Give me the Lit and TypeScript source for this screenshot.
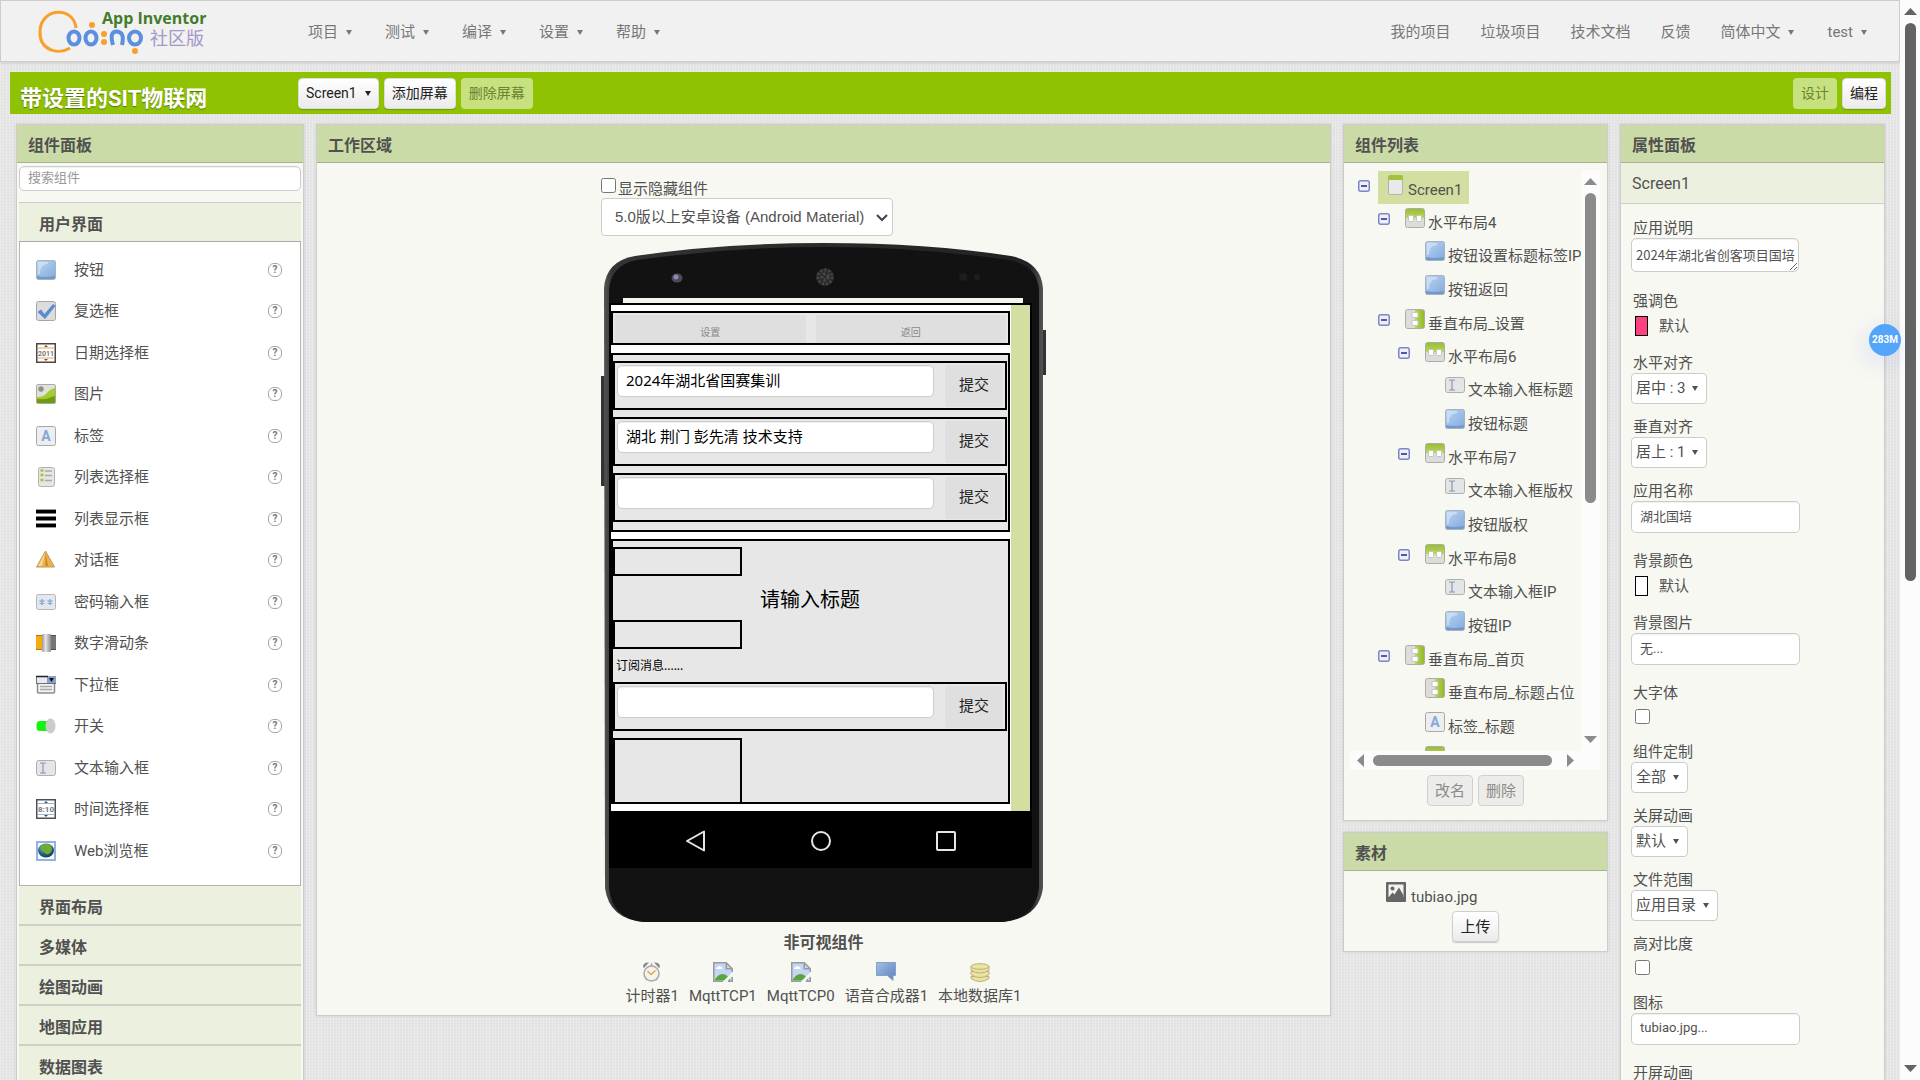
import { LitElement, html, svg, css, nothing } from 'lit';
import type { SVGTemplateResult } from 'lit';
import { customElement, property } from 'lit/decorators.js';
import { classMap } from 'lit/directives/class-map.js';

interface TreeNode {
  label: string;
  icon: string;
  level: number;
  branch?: boolean;
  selected?: boolean;
}

interface PropertyField {
  id: string;
  label: string;
  kind: 'textarea' | 'color' | 'select' | 'text' | 'checkbox';
  value?: string;
}

const ICONS: Record<string, SVGTemplateResult> = {
  button: svg`
    <defs>
      <linearGradient id="g" x1="0" y1="0" x2="1" y2="1">
        <stop offset="0" stop-color="#b9d2f1"/><stop offset="1" stop-color="#86aee0"/>
      </linearGradient>
    </defs>
    <rect x="0.5" y="0.5" width="19" height="19" rx="2" fill="#7397c8" stroke="#a9b3bf"/>
    <path d="M1 2q0-1 1-1h16q1 0 1 1v14q-9 2-18 0z" fill="url(#g)"/>
    <path d="M2 2h10v2q-8 0-8 10l-2 0z" fill="#d6e4f7" opacity="0.7"/>`,
  checkbox: svg`
    <rect x="0.5" y="0.5" width="19" height="19" rx="2" fill="#dcdcdc" stroke="#a6a6a6"/>
    <path d="M1.500 11l3.500-2.500 3.500 4.500L17 3l2.500 2L9 18z" fill="#5d8bd0"/>`,
  date: svg`
    <rect x="0.750" y="0.750" width="18.500" height="18.500" fill="#fff" stroke="#4d4744" stroke-width="1.500"/>
    <path d="M2 5h16M2 15h16" stroke="#e0a46b"/>
    <path d="M8 4l2-2 2 2zM8 16l2 2 2-2z" fill="#8c4a1d"/>
    <text x="10" y="13" text-anchor="middle" font-size="7" font-weight="bold" fill="#777">2011</text>`,
  image: svg`
    <rect x="0.500" y="0.500" width="19" height="19" rx="1.500" fill="#dfe2da" stroke="#a9aba4"/>
    <path d="M1 13q7 0 10-4t8-5v15H1z" fill="#a4cc2c"/>
    <path d="M1 15q8 1 12-1t6-2v7H1z" fill="#6f9a12"/>
    <circle cx="5" cy="5" r="2.700" fill="#8d8d8d"/>`,
  label: svg`
    <rect x="0.500" y="0.500" width="19" height="19" rx="2" fill="#eceeef" stroke="#a8a8a8"/>
    <text x="10" y="15" text-anchor="middle" font-size="14" font-weight="bold" fill="#86a8da">A</text>`,
  listpicker: svg`
    <rect x="2.500" y="0.500" width="16" height="19" rx="2" fill="#e6e6e3" stroke="#b3b3ae"/>
    <path d="M4.500 3.500h3M4.500 8h3M4.500 13h3" stroke="#a8c23c" stroke-width="2.500"/>
    <path d="M9 4h7M9 8.500h7M9 13.500h7" stroke="#a9a9a9" stroke-width="1.500"/>`,
  listview: svg`
    <path d="M0 2.500h20M0 9.500h20M0 16.500h20" stroke="#000" stroke-width="4"/>
    <path d="M0 0.500h20M0 18.500h20" stroke="#9a9a9a"/>`,
  notifier: svg`
    <path d="M9.500 1L0.500 17h18z" fill="#eeb04c" stroke="#bb9a62"/>
    <path d="M9.500 2L2 16h4z" fill="#f8d693"/>
    <path d="M9.500 2l0 14h2.500z" fill="#cf8421"/>`,
  password: svg`
    <rect x="0.500" y="2.500" width="19" height="15" rx="2" fill="#e4e7ec" stroke="#b3b6bb"/>
    <path d="M6 7v6M3.500 8.500l5 3M8.500 8.500l-5 3M14 7v6M11.500 8.500l5 3M16.500 8.500l-5 3" stroke="#88a9dd" stroke-width="1.400"/>`,
  slider: svg`
    <defs>
      <linearGradient id="g" x1="0" y1="0" x2="1" y2="0">
        <stop offset="0" stop-color="#9a9a9a"/><stop offset="0.400" stop-color="#e6e6e6"/><stop offset="1" stop-color="#8b8b8b"/>
      </linearGradient>
    </defs>
    <rect x="0" y="2" width="8" height="15" fill="#f3ac10"/>
    <path d="M0 2.500h8M0 16.500h8" stroke="#a87a12"/>
    <rect x="13" y="2" width="7" height="15" fill="#767676"/>
    <path d="M13 2.500h7M13 16.500h7" stroke="#4e4e4e"/>
    <rect x="6" y="1" width="9" height="18" rx="1" fill="url(#g)"/>`,
  spinner: svg`
    <rect x="1.500" y="4" width="17" height="14" rx="1" fill="#f2f2f2" stroke="#8d8d8d" stroke-width="1.500"/>
    <rect x="0.500" y="1.500" width="19" height="7" fill="#e9eaec" stroke="#6b7079"/>
    <rect x="11" y="1" width="9" height="7" fill="#86a0cf"/>
    <path d="M0 1.500h12" stroke="#222" stroke-width="1.500"/>
    <path d="M13 3h5l-2.500 4z" fill="#111"/>
    <path d="M4 11.500h12M4 14.500h12" stroke="#a9a9a9" stroke-width="1.500"/>`,
  switch: svg`
    <rect x="0.500" y="5" width="16" height="10" rx="3.500" fill="#11f511"/>
    <ellipse cx="14.500" cy="10" rx="5" ry="7.500" fill="#cbcbcb"/>`,
  textbox: svg`
    <rect x="0.500" y="2.500" width="19" height="15" rx="2" fill="#e4e5e7" stroke="#b0b0b0"/>
    <path d="M4 5h2q1 0 1 1v8q0 1-1 1H4M10 5H8q-1 0-1 1v8q0 1 1 1h2" fill="none" stroke="#8a96b4" stroke-width="1.200"/>`,
  time: svg`
    <rect x="0.750" y="0.750" width="18.500" height="18.500" fill="#fff" stroke="#4a5158" stroke-width="1.500"/>
    <path d="M2 4.500h16M2 15.500h16" stroke="#9db9d6"/>
    <path d="M8 4l2-2 2 2zM8 16l2 2 2-2z" fill="#33506e"/>
    <text x="10" y="13" text-anchor="middle" font-size="8" font-weight="bold" fill="#777">8:10</text>`,
  web: svg`
    <defs>
      <radialGradient id="g" cx="0.400" cy="0.300" r="0.800">
        <stop offset="0" stop-color="#9fd0c4"/><stop offset="0.500" stop-color="#2d6a8c"/><stop offset="1" stop-color="#0c2c50"/>
      </radialGradient>
    </defs>
    <rect x="1" y="1" width="18" height="18" fill="#f5f8fc" stroke="#94b1df" stroke-width="2"/>
    <ellipse cx="10" cy="9.500" rx="8" ry="7" fill="url(#g)"/>
    <path d="M6 4q5-2 9 0l1 5q-2 5-6 4l-3-3q-3-2-1-6z" fill="#6fae2b"/>`,
  form: svg`
    <rect x="3.500" y="0.500" width="14" height="19" rx="1.500" fill="#e9e9ea" stroke="#b3b3b0"/>
    <path d="M3 2q0-2 2-2h11q2 0 2 2v3H3z" fill="#a6c03f"/>`,
  horizontal: svg`
    <defs>
      <linearGradient id="g" x1="0" y1="0" x2="0" y2="1">
        <stop offset="0" stop-color="#9bbd35"/><stop offset="1" stop-color="#b9d75a"/>
      </linearGradient>
    </defs>
    <rect x="0.500" y="0.500" width="19" height="19" rx="2" fill="#dbdcdb" stroke="#acaea6"/>
    <path d="M1 2q0-1 1-1h16q1 0 1 1v8H1z" fill="url(#g)"/>
    <rect x="3.500" y="7.500" width="5" height="6" rx="1" fill="#fff" stroke="#c3c6b8"/>
    <rect x="11.500" y="7.500" width="5" height="6" rx="1" fill="#fff" stroke="#c3c6b8"/>`,
  vertical: svg`
    <defs>
      <linearGradient id="g" x1="0" y1="0" x2="1" y2="0">
        <stop offset="0" stop-color="#b9d75a"/><stop offset="1" stop-color="#94b92c"/>
      </linearGradient>
    </defs>
    <rect x="0.500" y="0.500" width="19" height="19" rx="2" fill="#dbdcdb" stroke="#acaea6"/>
    <path d="M10 1h8q1 0 1 1v16q0 1-1 1h-8z" fill="url(#g)"/>
    <rect x="7" y="3.500" width="6" height="5" rx="1" fill="#fff" stroke="#c3c6b8"/>
    <rect x="7" y="11.500" width="6" height="5" rx="1" fill="#fff" stroke="#c3c6b8"/>`,
  clock: svg`
    <path d="M1 5q0-5 6-4.500L2 6zM18 5q0-5-6-4.500L17 6z" fill="#8a8a8a"/>
    <path d="M4 18l2-2M15 18l-2-2M9.500 1.500v3" stroke="#9a9a9a" stroke-width="1.500"/>
    <circle cx="9.500" cy="11.500" r="7.500" fill="#f4f2ec" stroke="#a9a9a9" stroke-width="1.500"/>
    <path d="M5.500 9l3.500 3.500 4.500-4" fill="none" stroke="#e7a850" stroke-width="1.600"/>`,
  broken: svg`
    <path d="M0.750 0.750h12.500l6 6v12.500H0.750z" fill="#c6d5f6"/>
    <path d="M3 7q0-2 2-2 1-2 3 0 2 0 1.500 2z" fill="#fff"/>
    <path d="M1.500 18.500q3-6.500 8-6.500t8 6.500z" fill="#56a83d"/>
    <path d="M10 19.500l9.500-9.500v4L14 19.500z" fill="#f7f8f2"/>
    <path d="M10 19.250H0.750V0.750h12.500l6 6V10M13.250 0.750v6h6M19.250 15v4.250H15" fill="none" stroke="#9a9a9a" stroke-width="1.500"/>`,
  speech: svg`
    <defs>
      <linearGradient id="g" x1="0" y1="0" x2="1" y2="1">
        <stop offset="0" stop-color="#a3bee2"/><stop offset="1" stop-color="#5b80be"/>
      </linearGradient>
    </defs>
    <path d="M0.500 0.500h19v13H17v5l-5.500-5h-11z" fill="url(#g)" stroke="#86a0c8"/>`,
  database: svg`
    <g fill="#ebe3a0" stroke="#b9b17c">
      <path d="M1 14.500v2q4 3 9 3t9-3v-2z"/>
      <path d="M1 9.500v3q4 3 9 3t9-3v-3z"/>
      <path d="M1 4.500v3.500q4 3 9 3t9-3V4.500z"/>
      <ellipse cx="10" cy="4.500" rx="9" ry="2.800"/>
    </g>`,
  picture: svg`
    <rect x="0" y="0" width="20" height="20" rx="1" fill="#666"/>
    <rect x="2.500" y="2.500" width="15" height="12.500" fill="#f3f3f1"/>
    <circle cx="6.500" cy="6.500" r="2" fill="#666"/>
    <path d="M2.500 15.500l4-5 2 2 4.500-7 4.500 8v2z" fill="#666"/>`,
};

const PALETTE = [
  ['button', '按钮'],
  ['checkbox', '复选框'],
  ['date', '日期选择框'],
  ['image', '图片'],
  ['label', '标签'],
  ['listpicker', '列表选择框'],
  ['listview', '列表显示框'],
  ['notifier', '对话框'],
  ['password', '密码输入框'],
  ['slider', '数字滑动条'],
  ['spinner', '下拉框'],
  ['switch', '开关'],
  ['textbox', '文本输入框'],
  ['time', '时间选择框'],
  ['web', 'Web浏览框'],
];

const CATEGORIES = ['界面布局', '多媒体', '绘图动画', '地图应用', '数据图表'];

const TREE: TreeNode[] = [
  { label: 'Screen1', icon: 'form', level: 0, branch: true, selected: true },
  { label: '水平布局4', icon: 'horizontal', level: 1, branch: true },
  { label: '按钮设置标题标签IP', icon: 'button', level: 2 },
  { label: '按钮返回', icon: 'button', level: 2 },
  { label: '垂直布局_设置', icon: 'vertical', level: 1, branch: true },
  { label: '水平布局6', icon: 'horizontal', level: 2, branch: true },
  { label: '文本输入框标题', icon: 'textbox', level: 3 },
  { label: '按钮标题', icon: 'button', level: 3 },
  { label: '水平布局7', icon: 'horizontal', level: 2, branch: true },
  { label: '文本输入框版权', icon: 'textbox', level: 3 },
  { label: '按钮版权', icon: 'button', level: 3 },
  { label: '水平布局8', icon: 'horizontal', level: 2, branch: true },
  { label: '文本输入框IP', icon: 'textbox', level: 3 },
  { label: '按钮IP', icon: 'button', level: 3 },
  { label: '垂直布局_首页', icon: 'vertical', level: 1, branch: true },
  { label: '垂直布局_标题占位', icon: 'vertical', level: 2 },
  { label: '标签_标题', icon: 'label', level: 2 },
  { label: '', icon: 'horizontal', level: 2 },
];

const FIELDS: PropertyField[] = [
  { id: 'about', label: '应用说明', kind: 'textarea', value: '2024年湖北省创客项目国培' },
  { id: 'accent', label: '强调色', kind: 'color', value: '#ff4081' },
  { id: 'halign', label: '水平对齐', kind: 'select', value: '居中 : 3' },
  { id: 'valign', label: '垂直对齐', kind: 'select', value: '居上 : 1' },
  { id: 'appname', label: '应用名称', kind: 'text', value: '湖北国培' },
  { id: 'bgcolor', label: '背景颜色', kind: 'color', value: '#ffffff' },
  { id: 'bgimage', label: '背景图片', kind: 'text', value: '无...' },
  { id: 'bigtext', label: '大字体', kind: 'checkbox' },
  { id: 'blocks', label: '组件定制', kind: 'select', value: '全部' },
  { id: 'closeanim', label: '关屏动画', kind: 'select', value: '默认' },
  { id: 'filescope', label: '文件范围', kind: 'select', value: '应用目录' },
  { id: 'contrast', label: '高对比度', kind: 'checkbox' },
  { id: 'icon', label: '图标', kind: 'text', value: 'tubiao.jpg...' },
  { id: 'openanim', label: '开屏动画', kind: 'select', value: '默认' },
];

const HIDDEN_COMPONENTS = [
  ['clock', '计时器1'],
  ['broken', 'MqttTCP1'],
  ['broken', 'MqttTCP0'],
  ['speech', '语音合成器1'],
  ['database', '本地数据库1'],
];

@customElement('component-icon')
export class ComponentIcon extends LitElement {
  @property() name = '';

  static override styles = css`
    :host {
      display: block;
      flex: none;
      width: 20px;
      height: 20px;
    }

    svg {
      display: block;
      font-family: Roboto, sans-serif;
    }
  `;

  override render() {
    return html`<svg width="20" height="20" viewBox="0 0 20 20" aria-hidden="true">${ICONS[this.name]}</svg>`;
  }
}

@customElement('scroll-rail')
export class ScrollRail extends LitElement {
  @property({ type: Boolean, reflect: true }) horizontal = false;

  // share of the track that the thumb covers, in percent
  @property({ type: Number }) size = 50;

  static override styles = css`
    :host {
      display: flex;
      flex-direction: column;
      align-items: center;
      width: 19px;
      padding: 8px 0;
      box-sizing: border-box;
      background: #fcfcfc;
      color: #8b8b8b;
    }

    :host([horizontal]) {
      flex-direction: row;
      width: auto;
      height: 19px;
      padding: 0 7px;
    }

    svg {
      display: block;
      flex: none;
      fill: currentColor;
    }

    .track {
      flex: 1;
      width: 11px;
      margin: 8px 0;
    }

    :host([horizontal]) .track {
      width: auto;
      height: 11px;
      margin: 0 9px;
    }

    .thumb {
      width: 100%;
      height: 100%;
      border-radius: 6px;
      background: currentColor;
    }
  `;

  override render() {
    const side = this.horizontal ? 'width' : 'height';
    return html`
      ${this.horizontal
        ? html`<svg width="7" height="13"><path d="M7 0v13L0 6.500z"/></svg>`
        : html`<svg width="13" height="7"><path d="M0 7h13L6.500 0z"/></svg>`}
      <div class="track"><div class="thumb" style="${side}: ${this.size}%"></div></div>
      ${this.horizontal
        ? html`<svg width="7" height="13"><path d="M0 0v13l7-6.500z"/></svg>`
        : html`<svg width="13" height="7"><path d="M0 0h13L6.500 7z"/></svg>`}
    `;
  }
}

const controls = css`
  * {
    box-sizing: border-box;
  }

  button,
  input,
  select,
  textarea {
    margin: 0;
    font: inherit;
    color: inherit;
  }

  .btn {
    height: 31px;
    padding: 0 7px;
    border: 1px solid #d0d0d0;
    border-radius: 4px;
    background: linear-gradient(#fff, #ebebeb);
    box-shadow: 0 1px 1px rgba(0, 0, 0, 0.2);
    color: #222;
    line-height: 20px;
    white-space: nowrap;
  }

  .btn:disabled {
    background: #ececea;
    box-shadow: none;
    color: #8b8b88;
  }

  .caret::after {
    content: '';
    display: inline-block;
    margin-left: 8px;
    border: 3px solid transparent;
    border-top: 5px solid currentColor;
    border-bottom: 0;
    vertical-align: 2px;
  }

  input[type='checkbox'] {
    display: block;
    width: 15px;
    height: 15px;
  }

  .text {
    display: block;
    padding: 0 8px 3px;
    border: 1px solid #ccc;
    border-radius: 5px;
    background: #fff;
    box-shadow: inset 0 1px 1px rgba(0, 0, 0, 0.06);
    outline: none;
  }
`;

@customElement('phone-preview')
export class PhonePreview extends LitElement {
  static override styles = [
    controls,
    css`
      :host {
        display: block;
        position: relative;
        width: 445px;
        padding: 61px 14px 54px 8px;
        box-sizing: border-box;
        color: #000;
        font-family: 'Noto Sans', 'Noto Sans CJK SC', sans-serif;
        font-size: 15px;
      }

      .frame {
        position: absolute;
        inset: 0;
        width: 100%;
        height: 100%;
      }

      .display {
        position: relative;
        background: #000;
      }

      .screen {
        display: flex;
        padding: 2px 2px 0;
      }

      .form {
        flex: 1;
        padding: 6px 1px 7px 0;
        background: #fff;
      }

      .strip {
        width: 19px;
        background: #d2dfa1;
      }

      .box {
        border: 2px solid #000;
        background: #e7e7e7;
      }

      .tabs {
        display: flex;
        gap: 10px;
        padding: 2px 2px 0;
        margin-bottom: 8px;
      }

      .tabs button {
        flex: 1;
        height: 28px;
        padding: 6px 0 0;
        border: 0;
        background: #dfdfdf;
        color: #888;
        font-size: 10px;
        line-height: 20px;
      }

      .settings {
        display: flex;
        flex-direction: column;
        gap: 7px;
        padding: 6px 1px 8px 0;
        margin-bottom: 7px;
      }

      .row {
        display: flex;
        gap: 11px;
        padding: 2px 2px 1px;
      }

      .row .text {
        flex: 1;
        min-width: 0;
        height: 32px;
      }

      .row button {
        width: 58px;
        height: 42px;
        padding: 0 0 4px;
        border: 0;
        border-radius: 2px;
        background: #dfdfdf;
        color: #222;
      }

      .home {
        padding: 6px 1px 0 0;
      }

      .slot {
        width: 129px;
        height: 29px;
      }

      .title {
        margin: 0;
        padding-top: 4px;
        font-size: 20px;
        line-height: 40px;
        text-align: center;
      }

      .message {
        margin: 0;
        padding: 1px 0 0 3px;
        font-size: 12px;
        line-height: 32px;
      }

      .tall {
        height: 64px;
        margin-top: 7px;
        border-bottom: 0;
      }

      .keys {
        display: flex;
        justify-content: space-between;
        align-items: center;
        height: 57px;
        padding: 2px 75px 0 76px;
      }

      .keys svg {
        display: block;
        fill: none;
        stroke: #e6e6e6;
        stroke-width: 2;
      }
    `,
  ];

  private row(id: string, value: string) {
    return html`
      <div class="box row">
        <input class="text" type="text" id=${id} aria-label="文本输入框" .value=${value}>
        <button type="button">提交</button>
      </div>
    `;
  }

  override render() {
    return html`
      <svg class="frame" viewBox="0 0 445 680" preserveAspectRatio="none" aria-hidden="true">
        <defs>
          <linearGradient id="edge" x1="0" y1="0" x2="1" y2="0">
            <stop offset="0" stop-color="#555"/><stop offset="0.020" stop-color="#333"/>
            <stop offset="0.970" stop-color="#222"/><stop offset="1" stop-color="#555"/>
          </linearGradient>
        </defs>
        <path d="M0 134h4v110H0zM441 88h4v45h-4z" fill="#333"/>
        <path d="M3 46Q5 19 34 14Q120 1 223 1T410 14Q440 20 442 46V646Q438 676 402 680H43Q8 677 4 646z" fill="url(#edge)"/>
        <path d="M8 48Q10 23 36 18Q130 5 223 5T408 18Q436 23 438 48V646Q434 676 402 680H43Q11 677 8 646z" fill="#121212"/>
        <ellipse cx="76" cy="36" rx="5.500" ry="4.500" fill="#4a4a58"/>
        <circle cx="75" cy="35" r="2.500" fill="#8b8bb5"/>
        <circle cx="224" cy="35" r="9" fill="#2b2b2b"/>
        <circle cx="224" cy="35" r="7" fill="none" stroke="#454545" stroke-width="3" stroke-dasharray="2 2"/>
        <circle cx="224" cy="35" r="3" fill="none" stroke="#4c4c4c" stroke-width="3" stroke-dasharray="2 2"/>
        <circle cx="362" cy="35" r="4" fill="#1d1d1f"/>
        <circle cx="376" cy="35" r="3" fill="#1d1d1f"/>
        <path d="M22 56h400v6H22z" fill="#f5f5f0"/>
      </svg>
      <div class="display">
        <div class="screen">
          <div class="form">
            <div class="box tabs">
              <button type="button">设置</button>
              <button type="button">返回</button>
            </div>
            <div class="box settings">
              ${this.row('title', '2024年湖北省国赛集训')}
              ${this.row('copyright', '湖北 荆门 彭先清 技术支持')}
              ${this.row('ip', '')}
            </div>
            <div class="box home">
              <div class="box slot"></div>
              <p class="title">请输入标题</p>
              <div class="box slot"></div>
              <p class="message">订阅消息......</p>
              ${this.row('message', '')}
              <div class="box slot tall"></div>
            </div>
          </div>
          <div class="strip"></div>
        </div>
        <div class="keys">
          <svg width="22" height="22"><path d="M2 11L19 1.500v19z" stroke-linejoin="round"/></svg>
          <svg width="22" height="22"><circle cx="11" cy="11" r="9"/></svg>
          <svg width="22" height="22"><rect x="2" y="2" width="18" height="18" rx="1"/></svg>
        </div>
      </div>
    `;
  }
}

@customElement('app-root')
export class AppRoot extends LitElement {
  static override styles = [
    controls,
    css`
      :host {
        display: flex;
        height: 100vh;
        overflow: hidden;
        color: #515151;
        background: #e6e6e6;
        font-family: Roboto, 'Noto Sans CJK SC', sans-serif;
        font-size: 15px;
        line-height: 20px;
      }

      .page {
        flex: 1;
        min-width: 0;
        overflow: hidden;
        background:
          repeating-linear-gradient(90deg, rgba(255, 255, 255, 0.25) 0 1px, transparent 1px 3px),
          repeating-linear-gradient(rgba(0, 0, 0, 0.02) 0 1px, transparent 1px 3px),
          #e5e5e5;
      }

      .window-rail {
        flex: none;
        width: 20px;
        color: #636363;
      }

      /* top bar */
      .topbar {
        display: flex;
        align-items: center;
        height: 62px;
        padding: 1px 29px 0 36px;
        border: 1px solid #ccc;
        background: #f1f1f1;
        box-shadow: 0 1px 3px rgba(0, 0, 0, 0.12);
        color: #777;
      }

      .logo {
        display: block;
        flex: none;
        margin-right: 101px;
      }

      .menu {
        display: flex;
        gap: 33px;
      }

      .links {
        display: flex;
        gap: 30px;
        margin-left: auto;
      }

      .links .caret {
        margin-right: 3px;
      }

      .menu button,
      .links button {
        padding: 0;
        border: 0;
        background: none;
      }

      .links a {
        color: inherit;
        text-decoration: none;
      }

      /* project bar */
      .project {
        display: flex;
        align-items: center;
        gap: 5px;
        height: 42px;
        margin: 10px 9px 10px 10px;
        padding: 0 5px 0 10px;
        background: #8fc202;
        font-size: 14px;
      }

      .project h1 {
        width: 273px;
        margin: 0;
        padding-top: 11px;
        color: #fff;
        font-size: 22px;
        line-height: 28px;
        text-shadow: 0 1px 1px rgba(0, 0, 0, 0.4);
      }

      .project .btn {
        border-color: #dcdcdc;
      }

      .project .btn:disabled {
        border-color: transparent;
        background: rgba(255, 255, 255, 0.5);
        background-clip: border-box;
        color: #6c8330;
      }

      .project .spacer {
        flex: 1;
      }

      /* columns */
      .columns {
        display: flex;
        align-items: flex-start;
        gap: 12px;
        padding: 0 15px 0 16px;
      }

      .panel {
        border: 1px solid #ccc;
        background: #f7f8f2;
        box-shadow: 0 0 3px rgba(0, 0, 0, 0.1);
      }

      .panel > h2 {
        margin: 0;
        padding: 8px 11px 3px;
        border-bottom: 1px solid #a9b194;
        background: #cbdba7;
        font-size: 16px;
        line-height: 26px;
      }

      .palette {
        flex: none;
        width: 288px;
      }

      .work {
        flex: 1;
        min-width: 0;
      }

      .side {
        display: flex;
        flex: none;
        flex-direction: column;
        gap: 11px;
        width: 265px;
      }

      /* palette */
      .palette .body {
        padding: 3px 2px 0;
      }

      .search {
        width: 100%;
        height: 25px;
        margin-bottom: 11px;
        font-size: 13px;
      }

      .search::placeholder {
        color: #999;
      }

      .category {
        display: block;
        width: 100%;
        height: 40px;
        padding: 5px 0 0 20px;
        border: 0;
        border-bottom: 2px solid #ccd1c6;
        background: #ecf0df;
        font-size: 16px;
        font-weight: bold;
        text-align: left;
      }

      .category.open {
        border-top: 1px solid #ccc;
        border-bottom: 1px solid #a9a9a9;
      }

      .items {
        margin: 0;
        padding: 7px 18px 14px 16px;
        border: 1px solid #b4b4b4;
        border-top: 0;
        background: #fff;
        list-style: none;
      }

      .item {
        display: flex;
        align-items: center;
        gap: 18px;
        height: 41px;
      }

      .item:nth-child(even) {
        height: 42px;
      }

      .item span {
        flex: 1;
      }

      .help {
        width: 14px;
        height: 14px;
        padding: 0;
        border: 1px solid #a6a6a6;
        border-radius: 6px;
        background: #fff;
        color: #777;
        font-size: 10px;
        font-weight: bold;
        line-height: 12px;
      }

      /* work area */
      .canvas {
        width: 445px;
        margin: 0 auto;
        padding: 14px 0 9px;
      }

      .show-hidden {
        display: flex;
        gap: 2px;
        height: 21px;
        padding-top: 1px;
      }

      .show-hidden label {
        padding-top: 1px;
      }

      .select {
        display: inline-block;
        position: relative;
      }

      .select select {
        display: block;
        appearance: none;
        border: 1px solid #ccc;
        border-radius: 4px;
        background: #fff;
      }

      .select svg {
        position: absolute;
        top: 50%;
        right: 5px;
        margin-top: -3px;
        fill: none;
        stroke: #444;
        stroke-width: 2;
        pointer-events: none;
      }

      .device select {
        height: 38px;
        padding: 0 27px 0 13px;
        font-family: 'Liberation Sans', 'Noto Sans CJK SC', sans-serif;
      }

      phone-preview {
        margin-top: 6px;
      }

      .device {
        display: table;
      }

      .canvas h3 {
        margin: 6px 0 4px;
        font-size: 16px;
        line-height: 30px;
        text-align: center;
      }

      .hidden-components {
        display: flex;
        justify-content: center;
        gap: 10px;
        margin: 0;
        padding: 0;
        list-style: none;
      }

      .hidden-components li {
        display: flex;
        flex-direction: column;
        align-items: center;
        gap: 4px;
      }

      /* component tree */
      .tree {
        display: grid;
        grid-template-columns: minmax(0, 1fr) 19px;
        grid-template-rows: 581px 19px;
        margin: 7px 7px 5px 6px;
        background: #fcfcfc;
      }

      .nodes {
        margin: 0;
        padding: 1px 0 0 8px;
        overflow: hidden;
        background: #f7f8f2;
        list-style: none;
      }

      .node {
        display: flex;
        height: 34px;
        white-space: nowrap;
      }

      .node.branch {
        height: 33px;
      }

      .toggle {
        flex: none;
        width: 20px;
        height: 20px;
        padding: 9px 0 0;
        border: 0;
        background: none;
      }

      .toggle svg {
        display: block;
      }

      .name {
        display: flex;
        gap: 3px;
        padding: 4px 7px 0;
      }

      .name span {
        padding-top: 5px;
      }

      .selected .name {
        background: #d2dfa1;
      }

      .indent {
        flex: none;
        width: calc(var(--level) * 20px);
      }

      .actions {
        display: flex;
        justify-content: center;
        gap: 5px;
        padding-bottom: 14px;
      }

      .media {
        display: flex;
        flex-direction: column;
        align-items: center;
        gap: 9px;
        padding: 11px 0 9px;
      }

      .file {
        display: flex;
        gap: 5px;
        align-self: flex-start;
        padding-left: 42px;
      }

      .file span {
        padding-top: 5px;
        height: 20px;
      }

      /* properties */
      .properties h3 {
        margin: 0;
        padding: 11px 11px 9px;
        border-bottom: 1px solid #ccc;
        background: #ecf0df;
        font-size: 16px;
        font-weight: normal;
        line-height: 20px;
      }

      .fields {
        padding: 14px 10px;
      }

      .field > label {
        display: block;
        padding-left: 2px;
      }

      .field .text {
        width: 169px;
        height: 32px;
        margin-bottom: 18px;
        font-size: 13px;
      }

      .field textarea.text {
        width: 168px;
        height: 34px;
        padding: 7px 4px;
        margin-bottom: 19px;
        overflow: hidden;
        white-space: pre;
        font-family: 'Noto Sans CJK SC', sans-serif;
        line-height: 18px;
      }

      .field .select {
        margin-bottom: 13px;
        vertical-align: top;
      }

      .field .select select {
        height: 31px;
        padding: 0 20px 2px 4px;
      }

      .field .select::after {
        content: '';
        position: absolute;
        top: 13px;
        right: 9px;
        border: 3px solid transparent;
        border-top: 5px solid currentColor;
        border-bottom: 0;
        pointer-events: none;
      }

      .color {
        display: flex;
        align-items: center;
        gap: 11px;
        margin: 0 0 17px;
        padding: 5px 4px 0;
        border: 0;
        background: none;
      }

      .swatch {
        width: 13px;
        height: 20px;
        border: 1px solid #000;
      }

      .field input[type='checkbox'] {
        margin: 6px 4px 18px;
      }

      /* floating memory gauge over the page edge */
      .gauge {
        position: absolute;
        top: 324px;
        right: 19px;
        width: 32px;
        height: 32px;
        padding: 0;
        border: 0;
        border-radius: 50%;
        background: #52a5fb;
        box-shadow: -4px 6px 24px rgba(60, 90, 255, 0.15);
        color: #fff;
        font-size: 10px;
        font-weight: bold;
      }
    `,
  ];

  private renderLogo() {
    return html`
      <svg class="logo" width="170" height="50" viewBox="36 5 170 50" role="img" aria-label="App Inventor 社区版">
        <g fill="none" stroke-width="4">
          <path d="M75 26C73 4 40 5 39 29C38 49 58 53 69 46" stroke="#f8a02b" stroke-width="3"/>
          <ellipse cx="73" cy="36" rx="5.500" ry="6.500" stroke="#5b8fe0"/>
          <ellipse cx="90" cy="36" rx="5.500" ry="6.500" stroke="#5b8fe0"/>
          <path d="M112 43Q108 29 116 29.500T121 43" stroke="#5b8fe0"/>
          <ellipse cx="134" cy="36" rx="6" ry="6.500" stroke="#5b8fe0"/>
        </g>
        <g fill="#f8a02b">
          <circle cx="91" cy="23" r="3"/>
          <circle cx="103" cy="32" r="3"/>
          <circle cx="103" cy="40" r="3"/>
          <circle cx="134" cy="49" r="3"/>
        </g>
        <text x="101" y="22" font-family="Open Sans" font-size="16" font-weight="bold" fill="#437c2b">App Inventor</text>
        <text x="149" y="43" font-family="Noto Sans CJK SC" font-size="18" fill="#a498c8">社区版</text>
      </svg>
    `;
  }

  private renderPalette() {
    return html`
      <section class="panel palette">
        <h2>组件面板</h2>
        <div class="body">
          <input class="text search" type="text" placeholder="搜索组件" aria-label="搜索组件">
          <button class="category open" type="button">用户界面</button>
          <ul class="items">
            ${PALETTE.map(([icon, label]) => html`
              <li class="item">
                <component-icon name=${icon}></component-icon>
                <span>${label}</span>
                <button class="help" type="button">?</button>
              </li>
            `)}
          </ul>
          ${CATEGORIES.map((name) => html`<button class="category" type="button">${name}</button>`)}
        </div>
      </section>
    `;
  }

  private renderWork() {
    return html`
      <section class="panel work">
        <h2>工作区域</h2>
        <div class="canvas">
          <div class="show-hidden">
            <input type="checkbox" id="show-hidden">
            <label for="show-hidden">显示隐藏组件</label>
          </div>
          <div class="select device">
            <select aria-label="设备">
              <option>5.0版以上安卓设备 (Android Material)</option>
            </select>
            <svg width="12" height="8"><path d="M1 1l5 5 5-5"/></svg>
          </div>
          <phone-preview></phone-preview>
          <h3>非可视组件</h3>
          <ul class="hidden-components">
            ${HIDDEN_COMPONENTS.map(([icon, label]) => html`
              <li><component-icon name=${icon}></component-icon><span>${label}</span></li>
            `)}
          </ul>
        </div>
      </section>
    `;
  }

  private renderNode(node: TreeNode) {
    return html`
      <li class=${classMap({ node: true, branch: !!node.branch, selected: !!node.selected })}>
        <div class="indent" style="--level: ${node.branch ? node.level : node.level + 1}"></div>
        ${node.branch
          ? html`
            <button class="toggle" type="button" aria-label="折叠">
              <svg width="12" height="12">
                <rect x="0.750" y="0.750" width="10.500" height="10.500" rx="2" fill="#eef0fb" stroke="#7d86c4" stroke-width="1.500"/>
                <path d="M3 6h6" stroke="#1c2490" stroke-width="1.500"/>
              </svg>
            </button>`
          : nothing}
        <div class="name"><component-icon name=${node.icon}></component-icon><span>${node.label}</span></div>
      </li>
    `;
  }

  private renderTree() {
    return html`
      <div class="side">
        <section class="panel">
          <h2>组件列表</h2>
          <div class="tree">
            <ul class="nodes">${TREE.map((node) => this.renderNode(node))}</ul>
            <scroll-rail size="58"></scroll-rail>
            <scroll-rail horizontal size="97"></scroll-rail>
          </div>
          <div class="actions">
            <button class="btn" type="button" disabled>改名</button>
            <button class="btn" type="button" disabled>删除</button>
          </div>
        </section>
        <section class="panel">
          <h2>素材</h2>
          <div class="media">
            <div class="file"><component-icon name="picture"></component-icon><span>tubiao.jpg</span></div>
            <button class="btn" type="button">上传</button>
          </div>
        </section>
      </div>
    `;
  }

  private renderControl(field: PropertyField) {
    switch (field.kind) {
      case 'textarea':
        return html`<textarea class="text" id=${field.id} wrap="off" .value=${field.value ?? ''}></textarea>`;
      case 'color':
        return html`
          <button class="color" type="button" id=${field.id}>
            <span class="swatch" style="background: ${field.value}"></span>默认
          </button>`;
      case 'select':
        return html`
          <div class="select"><select id=${field.id}><option>${field.value}</option></select></div>`;
      case 'checkbox':
        return html`<input type="checkbox" id=${field.id}>`;
      default:
        return html`<input class="text" type="text" id=${field.id} .value=${field.value ?? ''}>`;
    }
  }

  private renderProperties() {
    return html`
      <div class="side">
        <section class="panel properties">
          <h2>属性面板</h2>
          <h3>Screen1</h3>
          <div class="fields">
            ${FIELDS.map((field) => html`
              <div class="field"><label for=${field.id}>${field.label}</label>${this.renderControl(field)}</div>
            `)}
          </div>
        </section>
      </div>
    `;
  }

  override render() {
    return html`
      <div class="page">
        <header class="topbar">
          ${this.renderLogo()}
          <nav class="menu">
            ${['项目', '测试', '编译', '设置', '帮助'].map((name) => html`
              <button class="caret" type="button">${name}</button>
            `)}
          </nav>
          <nav class="links">
            ${['我的项目', '垃圾项目', '技术文档', '反馈'].map((name) => html`<a href="#">${name}</a>`)}
            <button class="caret" type="button">简体中文</button>
            <button class="caret" type="button">test</button>
          </nav>
        </header>
        <div class="project">
          <h1>带设置的SIT物联网</h1>
          <button class="btn caret" type="button">Screen1</button>
          <button class="btn" type="button">添加屏幕</button>
          <button class="btn" type="button" disabled>删除屏幕</button>
          <div class="spacer"></div>
          <button class="btn" type="button" disabled>设计</button>
          <button class="btn" type="button">编程</button>
        </div>
        <main class="columns">
          ${this.renderPalette()}
          ${this.renderWork()}
          ${this.renderTree()}
          ${this.renderProperties()}
        </main>
      </div>
      <scroll-rail class="window-rail" size="54"></scroll-rail>
      <button class="gauge" type="button">283M</button>
    `;
  }
}

declare global {
  interface HTMLElementTagNameMap {
    'component-icon': ComponentIcon;
    'scroll-rail': ScrollRail;
    'phone-preview': PhonePreview;
    'app-root': AppRoot;
  }
}
